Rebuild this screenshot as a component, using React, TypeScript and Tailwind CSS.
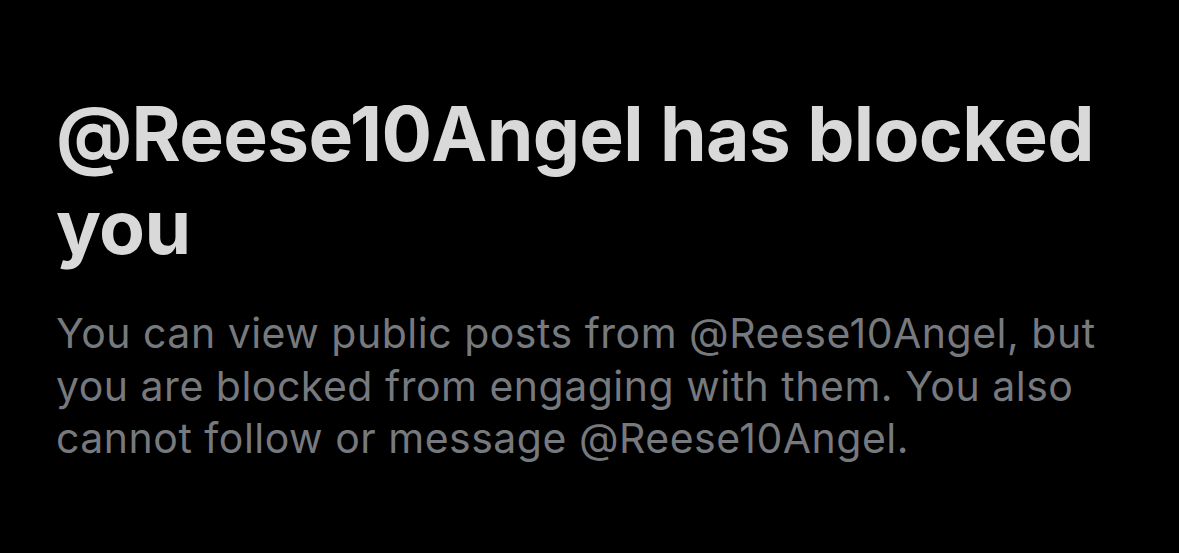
export default function App() {
  return (
    <div className="w-[1179px] h-[553px] bg-black overflow-hidden" style={{ fontFamily: "Inter, 'Noto Sans', sans-serif" }}>
      <div className="pl-[56px] pr-[60px] pt-[87px]">
        <h1 className="text-[75px] leading-[93px] font-bold text-[#d9d9d9] tracking-[-0.7px]">
          @Reese10Angel has blocked you
        </h1>
        <p className="mt-[34px] text-[41px] leading-[52.5px] text-[#76797e] tracking-[0.5px]">
          You can view public posts from @Reese10Angel, but you are blocked from engaging with them. You also cannot follow or message @Reese10Angel.
        </p>
      </div>
    </div>
  );
}
